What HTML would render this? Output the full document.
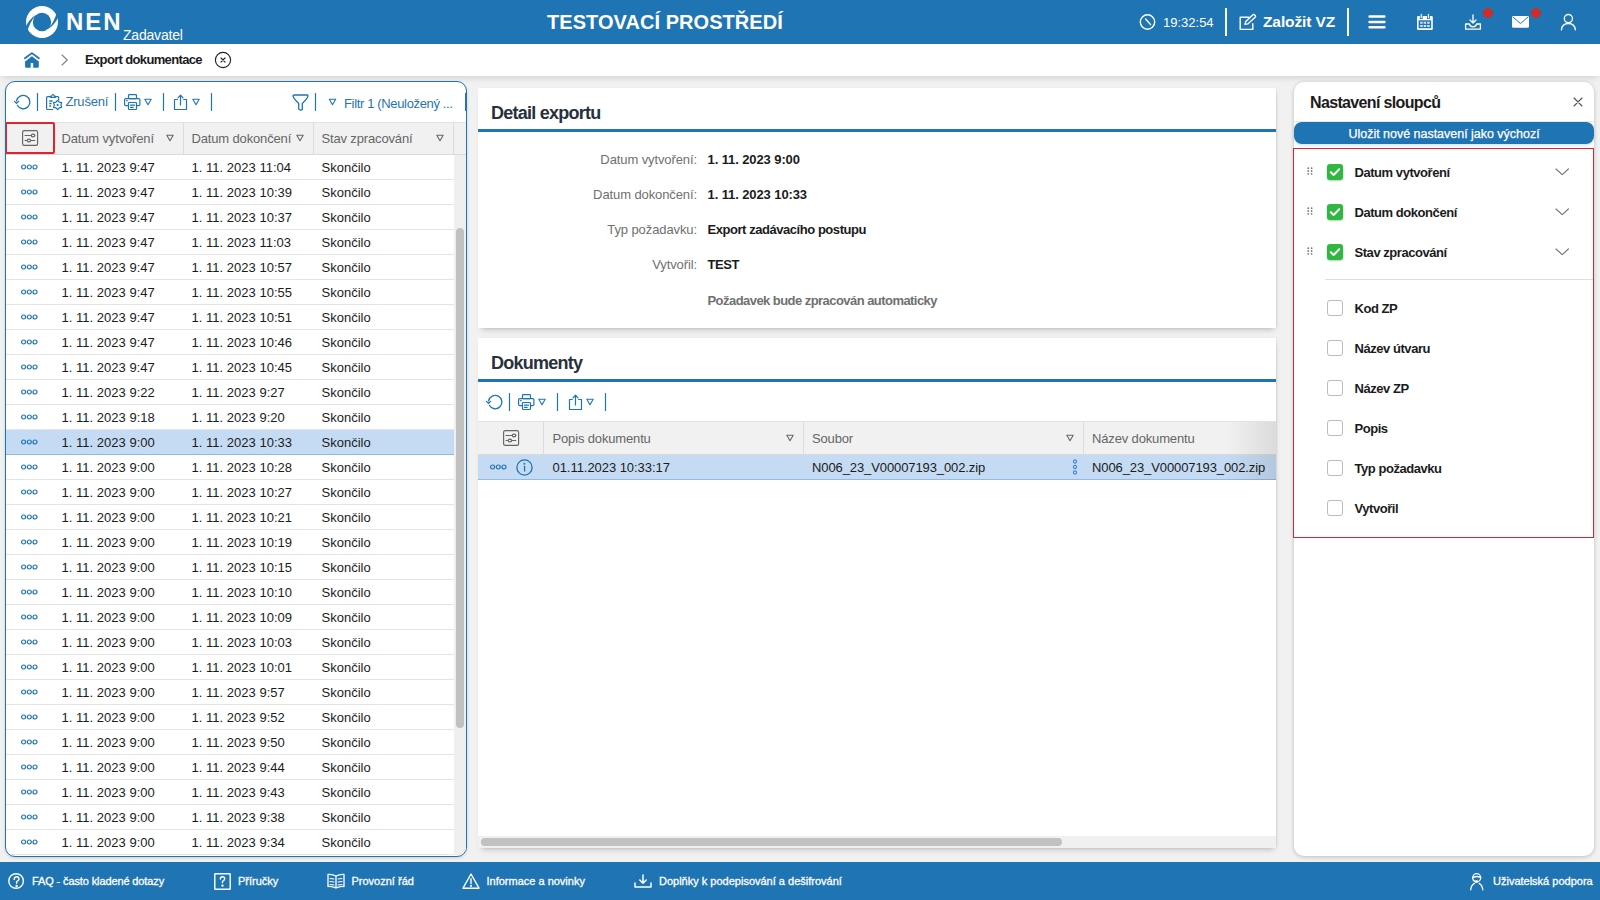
<!DOCTYPE html>
<html><head><meta charset="utf-8"><style>
*{box-sizing:border-box;margin:0;padding:0}
html,body{width:1600px;height:900px;overflow:hidden;background:#f1f1f1;font-family:"Liberation Sans",sans-serif;color:#1b1b1b}
.a{position:absolute}
.t{position:absolute;white-space:nowrap;line-height:1}
svg{position:absolute;overflow:visible}
#hdr{position:absolute;left:0;top:0;width:1600px;height:44px;background:#1f74b3;color:#fff}
#bc{position:absolute;left:0;top:44px;width:1600px;height:32px;background:#fff;box-shadow:0 3px 7px -2px rgba(0,0,0,.16)}
#ftr{position:absolute;left:0;top:862px;width:1600px;height:38px;background:#1f74b3;color:#fff;font-size:12px}
#ftr .t{-webkit-text-stroke:0.3px #fff}
#lp{position:absolute;left:5px;top:81px;width:462px;height:776px;border:1.5px solid #1f74b3;border-radius:10px;background:#fff;overflow:hidden;box-shadow:0 1px 3px rgba(0,0,0,.15)}
.row{position:absolute;left:0;width:448px;height:25px;border-bottom:1px solid #e4e4e4;font-size:13px}
.row .t{top:7px}
.panel{position:absolute;background:#fff;box-shadow:1px 4px 6px -3px rgba(0,0,0,.25),1px 0 2px -1px rgba(0,0,0,.18)}
.sep{position:absolute;width:2px;background:#1f74b3}
.hd{position:absolute;color:#6a6a6a;font-size:13px}
</style></head><body>
<div id="hdr">
<svg style="left:26px;top:6px" width="32" height="32" viewBox="0 0 32 32" fill="none" ><circle cx="16" cy="16" r="16" fill="#fff"/><circle cx="16" cy="16" r="9.2" fill="#1f74b3"/><path d="M10 9 C5.5 11.5 1.5 16 -0.5 22 L1 26 C3 19 6 13.5 10 9 Z" fill="#1f74b3"/><path d="M22 23 C26.5 20.5 30.5 16 32.5 10 L31 6 C29 13 26 18.5 22 23 Z" fill="#1f74b3"/></svg>
<div class="t" style="left:66px;top:10px;font-size:24px;font-weight:700;letter-spacing:1.9px">NEN</div>
<div class="t" style="left:123px;top:28px;font-size:14px;letter-spacing:-0.2px">Zadavatel</div>
<div class="t" style="left:547px;top:12px;font-size:20px;font-weight:700;letter-spacing:0.05px">TESTOVACÍ PROSTŘEDÍ</div>
<svg style="left:1139px;top:14px" width="17" height="17" viewBox="0 0 17 17" stroke="#fff" stroke-width="1.4" stroke-linecap="round" stroke-linejoin="round" fill="none" ><circle cx="8.5" cy="8" r="7.2"/><path d="M6.6 5 L11.6 10.6"/></svg>
<div class="t" style="left:1163px;top:16px;font-size:13px">19:32:54</div>
<div class="a" style="left:1225px;top:8px;width:2px;height:28px;background:#fff"></div>
<svg style="left:1239px;top:14px" width="18" height="17" viewBox="0 0 18 17" stroke="#fff" stroke-width="1.4" stroke-linecap="round" stroke-linejoin="round" fill="none" ><path d="M10 3.2 H1.2 V15.4 H13.8 V9.6"/><path d="M6 10.3 L6.8 7.6 L14.2 0.6 Q14.8 0.1 15.4 0.7 L16.4 1.7 Q16.9 2.3 16.4 2.9 L8.8 9.9 Z"/></svg>
<div class="t" style="left:1263px;top:14px;font-size:15.5px;font-weight:700;letter-spacing:-0.1px">Založit VZ</div>
<div class="a" style="left:1347px;top:8px;width:2px;height:28px;background:#fff"></div>
<svg style="left:1368px;top:14px" width="18" height="16" viewBox="0 0 18 16" stroke="#fff" stroke-width="2.5" stroke-linecap="round" stroke-linejoin="round" fill="none" ><path d="M1.6 2.5 H16.4 M1.6 8 H16.4 M1.6 13.3 H16.4"/></svg>
<svg style="left:1416px;top:13px" width="18" height="18" viewBox="0 0 18 18" fill="none" ><rect x="1" y="3" width="15.8" height="14" rx="1.3" fill="#fff"/><rect x="2.6" y="7.3" width="12.6" height="7.9" fill="#1f74b3"/><path d="M4.2 8.8 H6.7 V10.8 H4.2 Z M7.7 8.8 H10.2 V10.8 H7.7 Z M11.2 8.8 H13.7 V10.8 H11.2 Z M4.2 12 H6.7 V14 H4.2 Z M7.7 12 H10.2 V14 H7.7 Z M11.2 12 H13.7 V14 H11.2 Z" fill="#fff" fill-opacity="0.8"/><rect x="4.2" y="0.6" width="2" height="5" fill="#fff" stroke="#1f74b3" stroke-width="0.8"/><rect x="11.4" y="0.6" width="2" height="5" fill="#fff" stroke="#1f74b3" stroke-width="0.8"/></svg>
<svg style="left:1464px;top:14px" width="18" height="17" viewBox="0 0 18 17" stroke="#fff" stroke-width="1.3" stroke-linecap="round" stroke-linejoin="round" fill="none" ><path d="M9 0.8 V8.8 M6 6 L9 9 L12 6"/><path d="M1.6 10 V15.2 H16.4 V10 H12.6 C12.1 12 10.9 12.8 9 12.8 C7.1 12.8 5.9 12 5.4 10 Z"/></svg>
<div class="a" style="left:1483px;top:8px;width:10px;height:10px;border-radius:50%;background:#cf2b2b"></div>
<svg style="left:1512px;top:16px" width="17" height="12" viewBox="0 0 17 12" fill="none" ><rect x="0" y="0" width="17" height="11.8" rx="1.4" fill="#fff" stroke="none"/><path d="M0.9 0.9 L8.5 7.6 L16.1 0.9" stroke="#1f74b3" stroke-width="1" fill="none"/></svg>
<div class="a" style="left:1531px;top:8px;width:10px;height:10px;border-radius:50%;background:#cf2b2b"></div>
<svg style="left:1560px;top:13px" width="18" height="18" viewBox="0 0 18 18" stroke="#fff" stroke-width="1.3" stroke-linecap="round" stroke-linejoin="round" fill="none" ><circle cx="8.4" cy="5.6" r="4.1"/><path d="M1.4 16.9 C1.9 12.6 4.8 10.5 8.4 10.5 C12 10.5 14.9 12.6 15.4 16.9"/></svg>
</div>
<div id="bc">
<svg style="left:24px;top:8px" width="16" height="16" viewBox="0 0 16 16" fill="none" ><path d="M0.9 6.3 L7.9 1.1 L14.9 6.3" stroke="#1f74b3" stroke-width="1.8" fill="none" stroke-linecap="round" stroke-linejoin="round"/><path d="M1.1 9.6 L7.9 4.2 L14.8 9.6 V14.5 Q14.8 15.7 13.6 15.7 H9.2 V10.9 H6.7 V15.7 H2.3 Q1.1 15.7 1.1 14.5 Z" fill="#1f74b3"/></svg>
<svg style="left:60px;top:10px" width="10" height="12" viewBox="0 0 10 12" stroke="#808080" stroke-width="1.1" stroke-linecap="round" stroke-linejoin="round" fill="none" ><path d="M2 1 L7.3 6 L2 11"/></svg>
<div class="t" style="left:85px;top:9px;font-size:13px;font-weight:700;letter-spacing:-0.65px">Export dokumentace</div>
<svg style="left:214px;top:7px" width="18" height="18" viewBox="0 0 18 18" stroke="#222" stroke-width="1.15" stroke-linecap="round" stroke-linejoin="round" fill="none" ><circle cx="9" cy="9" r="7.6"/><path d="M7 7 L11 11 M11 7 L7 11"/></svg>
</div>
<div id="lp">
<div class="a" style="left:-6.5px;top:-82.5px;width:1600px;height:900px">
<svg style="left:14px;top:94px" width="17" height="16" viewBox="0 0 17 16" stroke="#1f74b3" stroke-width="1.3" stroke-linecap="round" stroke-linejoin="round" fill="none" ><path d="M2.6 6.9 A6.7 6.7 0 1 1 3.3 11.3"/><path d="M0.5 7.4 L2.5 9.4 L4.6 7.4" /></svg>
<svg style="left:35px;top:93.0px" width="4" height="18" viewBox="0 0 4 18" stroke="#1f74b3" stroke-width="1.2" stroke-linecap="round" stroke-linejoin="round" fill="none" ><path d="M2.50 0.6 V17.4"/></svg>
<svg style="left:46px;top:94px" width="17" height="17" viewBox="0 0 17 17" stroke="#1f74b3" stroke-width="1.2" stroke-linecap="round" stroke-linejoin="round" fill="none" ><path d="M4.8 2.6 H1.7 Q0.6 2.6 0.6 3.7 V14.4 Q0.6 15.5 1.7 15.5 H6.8"/><path d="M9.2 2.6 H11.6 Q12.7 2.6 12.7 3.7 V6"/><path d="M4.6 3.4 V2.7 Q4.6 2.1 5.2 2.1 H5.5 Q6 0.6 7 0.6 Q8 0.6 8.5 2.1 H8.8 Q9.4 2.1 9.4 2.7 V3.4 Z" stroke-width="1.1"/><path d="M3.3 7 H6.6 M3.3 9.5 H5.6 M3.3 11.9 H5" stroke-width="1.5" stroke-linecap="butt"/><path d="M11.60 6.30 L13.25 8.14 L15.67 8.65 L14.90 11.00 L15.67 13.35 L13.25 13.86 L11.60 15.70 L9.95 13.86 L7.53 13.35 L8.30 11.00 L7.53 8.65 L9.95 8.14 Z" fill="#fff" stroke-width="1.2"/><circle cx="11.6" cy="11" r="1.1" fill="#1f74b3" stroke="none"/></svg>
<div class="t" style="left:66px;top:95px;font-size:13px;color:#1f74b3;letter-spacing:-0.2px">Zrušení</div>
<svg style="left:113px;top:93.0px" width="4" height="18" viewBox="0 0 4 18" stroke="#1f74b3" stroke-width="1.2" stroke-linecap="round" stroke-linejoin="round" fill="none" ><path d="M2.50 0.6 V17.4"/></svg>
<svg style="left:124px;top:94px" width="17" height="17" viewBox="0 0 17 17" stroke="#1f74b3" stroke-width="1.2" stroke-linecap="round" stroke-linejoin="round" fill="none" ><rect x="4.5" y="0.6" width="8" height="4" rx="0.8"/><rect x="0.6" y="4.6" width="15.3" height="7" rx="1.2"/><rect x="4.5" y="8.5" width="8" height="7" rx="0.8" fill="#fff"/><path d="M6.5 11.2 H10.5 M6.5 13.3 H9.2 M2.6 6.7 H3.2"/></svg>
<svg style="left:144px;top:98px" width="9" height="8" viewBox="0 0 9 8" stroke="#1f74b3" stroke-width="1.1" stroke-linecap="round" stroke-linejoin="round" fill="none" ><path d="M0.80 1.30 H7.20 L4.00 6.70 Z"/></svg>
<svg style="left:161px;top:93.0px" width="4" height="18" viewBox="0 0 4 18" stroke="#1f74b3" stroke-width="1.2" stroke-linecap="round" stroke-linejoin="round" fill="none" ><path d="M2.50 0.6 V17.4"/></svg>
<svg style="left:173px;top:94px" width="15" height="17" viewBox="0 0 15 17" stroke="#1f74b3" stroke-width="1.2" stroke-linecap="round" stroke-linejoin="round" fill="none" ><path d="M4.3 5.5 H1.5 V15.5 H13.5 V5.5 H10.7"/><path d="M7.5 11 V1.3 M5 3.8 L7.5 1.2 L10 3.8"/></svg>
<svg style="left:192px;top:98px" width="9" height="8" viewBox="0 0 9 8" stroke="#1f74b3" stroke-width="1.1" stroke-linecap="round" stroke-linejoin="round" fill="none" ><path d="M0.80 1.30 H7.20 L4.00 6.70 Z"/></svg>
<svg style="left:209px;top:93.0px" width="4" height="18" viewBox="0 0 4 18" stroke="#1f74b3" stroke-width="1.2" stroke-linecap="round" stroke-linejoin="round" fill="none" ><path d="M2.50 0.6 V17.4"/></svg>
<svg style="left:292px;top:94px" width="17" height="17" viewBox="0 0 17 17" stroke="#1f74b3" stroke-width="1.3" stroke-linecap="round" stroke-linejoin="round" fill="none" ><path d="M1 1.8 Q1 1 2 1 H15 Q16 1 16 1.8 Q16 4.2 10.3 9.4 V15.6 L8.5 16.2 L6.7 15 V9.4 Q1 4.2 1 1.8 Z"/></svg>
<svg style="left:313px;top:93.0px" width="4" height="18" viewBox="0 0 4 18" stroke="#1f74b3" stroke-width="1.2" stroke-linecap="round" stroke-linejoin="round" fill="none" ><path d="M2.50 0.6 V17.4"/></svg>
<svg style="left:328px;top:98px" width="9" height="8" viewBox="0 0 9 8" stroke="#1f74b3" stroke-width="1.1" stroke-linecap="round" stroke-linejoin="round" fill="none" ><path d="M1.30 1.30 H7.70 L4.50 6.70 Z"/></svg>
<div class="t" style="left:344.5px;top:97px;font-size:13px;color:#1f74b3;letter-spacing:-0.35px">Filtr 1 (Neuložený ...</div>
<div class="a" style="left:465px;top:93px;width:2px;height:18px;background:#1f74b3"></div>
<div class="a" style="left:6px;top:122px;width:460px;height:33px;background:#f1f1f1;border-top:1px solid #e2e2e2;border-bottom:1px solid #dadada"></div>
<div class="a" style="left:183px;top:123px;width:1px;height:31px;background:#dcdcdc"></div>
<div class="a" style="left:313px;top:123px;width:1px;height:31px;background:#dcdcdc"></div>
<div class="a" style="left:453px;top:123px;width:1px;height:31px;background:#dcdcdc"></div>
<div class="a" style="left:5px;top:122px;width:50px;height:32px;border:2px solid #e0232d;border-radius:2px"></div>
<svg style="left:22px;top:130px" width="17" height="17" viewBox="0 0 17 17" stroke="#666" stroke-width="1.15" stroke-linecap="round" stroke-linejoin="round" fill="none" ><rect x="0.6" y="0.6" width="15" height="14.8" rx="1.6"/><path d="M3 5.5 H12.8 M3 10.5 H12.8"/><ellipse cx="11" cy="5.5" rx="1.8" ry="1.4" fill="#f1f1f1"/><ellipse cx="6.9" cy="10.5" rx="1.8" ry="1.4" fill="#f1f1f1"/></svg>
<div class="t" style="left:62px;top:132px;font-size:13px;color:#666;letter-spacing:-0.15px">Datum vytvoření</div>
<svg style="left:166px;top:134px" width="9" height="8" viewBox="0 0 9 8" stroke="#666" stroke-width="1.1" stroke-linecap="round" stroke-linejoin="round" fill="none" ><path d="M0.80 1.30 H7.20 L4.00 6.70 Z"/></svg>
<div class="t" style="left:192px;top:132px;font-size:13px;color:#666;letter-spacing:-0.15px">Datum dokončení</div>
<svg style="left:296px;top:134px" width="9" height="8" viewBox="0 0 9 8" stroke="#666" stroke-width="1.1" stroke-linecap="round" stroke-linejoin="round" fill="none" ><path d="M0.80 1.30 H7.20 L4.00 6.70 Z"/></svg>
<div class="t" style="left:322px;top:132px;font-size:13px;color:#666;letter-spacing:-0.15px">Stav zpracování</div>
<svg style="left:436px;top:134px" width="9" height="8" viewBox="0 0 9 8" stroke="#666" stroke-width="1.1" stroke-linecap="round" stroke-linejoin="round" fill="none" ><path d="M0.80 1.30 H7.20 L4.00 6.70 Z"/></svg>
<div class="row" style="left:6px;top:155px;"></div>
<svg style="left:21.5px;top:164.5px" width="17" height="6" viewBox="0 0 17 6" stroke="#1f74b3" stroke-width="1.2" stroke-linecap="round" stroke-linejoin="round" fill="none" ><circle cx="2.6" cy="3" r="2"/><circle cx="8.3" cy="3" r="2"/><circle cx="14" cy="3" r="2"/></svg>
<div class="t" style="left:62px;top:161px;font-size:13px;letter-spacing:0.02px">1. 11. 2023 9:47</div>
<div class="t" style="left:192px;top:161px;font-size:13px;letter-spacing:0.02px">1. 11. 2023 11:04</div>
<div class="t" style="left:322px;top:161px;font-size:13px">Skončilo</div>
<div class="row" style="left:6px;top:180px;"></div>
<svg style="left:21.5px;top:189.5px" width="17" height="6" viewBox="0 0 17 6" stroke="#1f74b3" stroke-width="1.2" stroke-linecap="round" stroke-linejoin="round" fill="none" ><circle cx="2.6" cy="3" r="2"/><circle cx="8.3" cy="3" r="2"/><circle cx="14" cy="3" r="2"/></svg>
<div class="t" style="left:62px;top:186px;font-size:13px;letter-spacing:0.02px">1. 11. 2023 9:47</div>
<div class="t" style="left:192px;top:186px;font-size:13px;letter-spacing:0.02px">1. 11. 2023 10:39</div>
<div class="t" style="left:322px;top:186px;font-size:13px">Skončilo</div>
<div class="row" style="left:6px;top:205px;"></div>
<svg style="left:21.5px;top:214.5px" width="17" height="6" viewBox="0 0 17 6" stroke="#1f74b3" stroke-width="1.2" stroke-linecap="round" stroke-linejoin="round" fill="none" ><circle cx="2.6" cy="3" r="2"/><circle cx="8.3" cy="3" r="2"/><circle cx="14" cy="3" r="2"/></svg>
<div class="t" style="left:62px;top:211px;font-size:13px;letter-spacing:0.02px">1. 11. 2023 9:47</div>
<div class="t" style="left:192px;top:211px;font-size:13px;letter-spacing:0.02px">1. 11. 2023 10:37</div>
<div class="t" style="left:322px;top:211px;font-size:13px">Skončilo</div>
<div class="row" style="left:6px;top:230px;"></div>
<svg style="left:21.5px;top:239.5px" width="17" height="6" viewBox="0 0 17 6" stroke="#1f74b3" stroke-width="1.2" stroke-linecap="round" stroke-linejoin="round" fill="none" ><circle cx="2.6" cy="3" r="2"/><circle cx="8.3" cy="3" r="2"/><circle cx="14" cy="3" r="2"/></svg>
<div class="t" style="left:62px;top:236px;font-size:13px;letter-spacing:0.02px">1. 11. 2023 9:47</div>
<div class="t" style="left:192px;top:236px;font-size:13px;letter-spacing:0.02px">1. 11. 2023 11:03</div>
<div class="t" style="left:322px;top:236px;font-size:13px">Skončilo</div>
<div class="row" style="left:6px;top:255px;"></div>
<svg style="left:21.5px;top:264.5px" width="17" height="6" viewBox="0 0 17 6" stroke="#1f74b3" stroke-width="1.2" stroke-linecap="round" stroke-linejoin="round" fill="none" ><circle cx="2.6" cy="3" r="2"/><circle cx="8.3" cy="3" r="2"/><circle cx="14" cy="3" r="2"/></svg>
<div class="t" style="left:62px;top:261px;font-size:13px;letter-spacing:0.02px">1. 11. 2023 9:47</div>
<div class="t" style="left:192px;top:261px;font-size:13px;letter-spacing:0.02px">1. 11. 2023 10:57</div>
<div class="t" style="left:322px;top:261px;font-size:13px">Skončilo</div>
<div class="row" style="left:6px;top:280px;"></div>
<svg style="left:21.5px;top:289.5px" width="17" height="6" viewBox="0 0 17 6" stroke="#1f74b3" stroke-width="1.2" stroke-linecap="round" stroke-linejoin="round" fill="none" ><circle cx="2.6" cy="3" r="2"/><circle cx="8.3" cy="3" r="2"/><circle cx="14" cy="3" r="2"/></svg>
<div class="t" style="left:62px;top:286px;font-size:13px;letter-spacing:0.02px">1. 11. 2023 9:47</div>
<div class="t" style="left:192px;top:286px;font-size:13px;letter-spacing:0.02px">1. 11. 2023 10:55</div>
<div class="t" style="left:322px;top:286px;font-size:13px">Skončilo</div>
<div class="row" style="left:6px;top:305px;"></div>
<svg style="left:21.5px;top:314.5px" width="17" height="6" viewBox="0 0 17 6" stroke="#1f74b3" stroke-width="1.2" stroke-linecap="round" stroke-linejoin="round" fill="none" ><circle cx="2.6" cy="3" r="2"/><circle cx="8.3" cy="3" r="2"/><circle cx="14" cy="3" r="2"/></svg>
<div class="t" style="left:62px;top:311px;font-size:13px;letter-spacing:0.02px">1. 11. 2023 9:47</div>
<div class="t" style="left:192px;top:311px;font-size:13px;letter-spacing:0.02px">1. 11. 2023 10:51</div>
<div class="t" style="left:322px;top:311px;font-size:13px">Skončilo</div>
<div class="row" style="left:6px;top:330px;"></div>
<svg style="left:21.5px;top:339.5px" width="17" height="6" viewBox="0 0 17 6" stroke="#1f74b3" stroke-width="1.2" stroke-linecap="round" stroke-linejoin="round" fill="none" ><circle cx="2.6" cy="3" r="2"/><circle cx="8.3" cy="3" r="2"/><circle cx="14" cy="3" r="2"/></svg>
<div class="t" style="left:62px;top:336px;font-size:13px;letter-spacing:0.02px">1. 11. 2023 9:47</div>
<div class="t" style="left:192px;top:336px;font-size:13px;letter-spacing:0.02px">1. 11. 2023 10:46</div>
<div class="t" style="left:322px;top:336px;font-size:13px">Skončilo</div>
<div class="row" style="left:6px;top:355px;"></div>
<svg style="left:21.5px;top:364.5px" width="17" height="6" viewBox="0 0 17 6" stroke="#1f74b3" stroke-width="1.2" stroke-linecap="round" stroke-linejoin="round" fill="none" ><circle cx="2.6" cy="3" r="2"/><circle cx="8.3" cy="3" r="2"/><circle cx="14" cy="3" r="2"/></svg>
<div class="t" style="left:62px;top:361px;font-size:13px;letter-spacing:0.02px">1. 11. 2023 9:47</div>
<div class="t" style="left:192px;top:361px;font-size:13px;letter-spacing:0.02px">1. 11. 2023 10:45</div>
<div class="t" style="left:322px;top:361px;font-size:13px">Skončilo</div>
<div class="row" style="left:6px;top:380px;"></div>
<svg style="left:21.5px;top:389.5px" width="17" height="6" viewBox="0 0 17 6" stroke="#1f74b3" stroke-width="1.2" stroke-linecap="round" stroke-linejoin="round" fill="none" ><circle cx="2.6" cy="3" r="2"/><circle cx="8.3" cy="3" r="2"/><circle cx="14" cy="3" r="2"/></svg>
<div class="t" style="left:62px;top:386px;font-size:13px;letter-spacing:0.02px">1. 11. 2023 9:22</div>
<div class="t" style="left:192px;top:386px;font-size:13px;letter-spacing:0.02px">1. 11. 2023 9:27</div>
<div class="t" style="left:322px;top:386px;font-size:13px">Skončilo</div>
<div class="row" style="left:6px;top:405px;"></div>
<svg style="left:21.5px;top:414.5px" width="17" height="6" viewBox="0 0 17 6" stroke="#1f74b3" stroke-width="1.2" stroke-linecap="round" stroke-linejoin="round" fill="none" ><circle cx="2.6" cy="3" r="2"/><circle cx="8.3" cy="3" r="2"/><circle cx="14" cy="3" r="2"/></svg>
<div class="t" style="left:62px;top:411px;font-size:13px;letter-spacing:0.02px">1. 11. 2023 9:18</div>
<div class="t" style="left:192px;top:411px;font-size:13px;letter-spacing:0.02px">1. 11. 2023 9:20</div>
<div class="t" style="left:322px;top:411px;font-size:13px">Skončilo</div>
<div class="row" style="left:6px;top:430px;background:#c5dbf3;border-bottom-color:#8fbbe6;"></div>
<svg style="left:21.5px;top:439.5px" width="17" height="6" viewBox="0 0 17 6" stroke="#1f74b3" stroke-width="1.2" stroke-linecap="round" stroke-linejoin="round" fill="none" ><circle cx="2.6" cy="3" r="2"/><circle cx="8.3" cy="3" r="2"/><circle cx="14" cy="3" r="2"/></svg>
<div class="t" style="left:62px;top:436px;font-size:13px;letter-spacing:0.02px">1. 11. 2023 9:00</div>
<div class="t" style="left:192px;top:436px;font-size:13px;letter-spacing:0.02px">1. 11. 2023 10:33</div>
<div class="t" style="left:322px;top:436px;font-size:13px">Skončilo</div>
<div class="row" style="left:6px;top:455px;"></div>
<svg style="left:21.5px;top:464.5px" width="17" height="6" viewBox="0 0 17 6" stroke="#1f74b3" stroke-width="1.2" stroke-linecap="round" stroke-linejoin="round" fill="none" ><circle cx="2.6" cy="3" r="2"/><circle cx="8.3" cy="3" r="2"/><circle cx="14" cy="3" r="2"/></svg>
<div class="t" style="left:62px;top:461px;font-size:13px;letter-spacing:0.02px">1. 11. 2023 9:00</div>
<div class="t" style="left:192px;top:461px;font-size:13px;letter-spacing:0.02px">1. 11. 2023 10:28</div>
<div class="t" style="left:322px;top:461px;font-size:13px">Skončilo</div>
<div class="row" style="left:6px;top:480px;"></div>
<svg style="left:21.5px;top:489.5px" width="17" height="6" viewBox="0 0 17 6" stroke="#1f74b3" stroke-width="1.2" stroke-linecap="round" stroke-linejoin="round" fill="none" ><circle cx="2.6" cy="3" r="2"/><circle cx="8.3" cy="3" r="2"/><circle cx="14" cy="3" r="2"/></svg>
<div class="t" style="left:62px;top:486px;font-size:13px;letter-spacing:0.02px">1. 11. 2023 9:00</div>
<div class="t" style="left:192px;top:486px;font-size:13px;letter-spacing:0.02px">1. 11. 2023 10:27</div>
<div class="t" style="left:322px;top:486px;font-size:13px">Skončilo</div>
<div class="row" style="left:6px;top:505px;"></div>
<svg style="left:21.5px;top:514.5px" width="17" height="6" viewBox="0 0 17 6" stroke="#1f74b3" stroke-width="1.2" stroke-linecap="round" stroke-linejoin="round" fill="none" ><circle cx="2.6" cy="3" r="2"/><circle cx="8.3" cy="3" r="2"/><circle cx="14" cy="3" r="2"/></svg>
<div class="t" style="left:62px;top:511px;font-size:13px;letter-spacing:0.02px">1. 11. 2023 9:00</div>
<div class="t" style="left:192px;top:511px;font-size:13px;letter-spacing:0.02px">1. 11. 2023 10:21</div>
<div class="t" style="left:322px;top:511px;font-size:13px">Skončilo</div>
<div class="row" style="left:6px;top:530px;"></div>
<svg style="left:21.5px;top:539.5px" width="17" height="6" viewBox="0 0 17 6" stroke="#1f74b3" stroke-width="1.2" stroke-linecap="round" stroke-linejoin="round" fill="none" ><circle cx="2.6" cy="3" r="2"/><circle cx="8.3" cy="3" r="2"/><circle cx="14" cy="3" r="2"/></svg>
<div class="t" style="left:62px;top:536px;font-size:13px;letter-spacing:0.02px">1. 11. 2023 9:00</div>
<div class="t" style="left:192px;top:536px;font-size:13px;letter-spacing:0.02px">1. 11. 2023 10:19</div>
<div class="t" style="left:322px;top:536px;font-size:13px">Skončilo</div>
<div class="row" style="left:6px;top:555px;"></div>
<svg style="left:21.5px;top:564.5px" width="17" height="6" viewBox="0 0 17 6" stroke="#1f74b3" stroke-width="1.2" stroke-linecap="round" stroke-linejoin="round" fill="none" ><circle cx="2.6" cy="3" r="2"/><circle cx="8.3" cy="3" r="2"/><circle cx="14" cy="3" r="2"/></svg>
<div class="t" style="left:62px;top:561px;font-size:13px;letter-spacing:0.02px">1. 11. 2023 9:00</div>
<div class="t" style="left:192px;top:561px;font-size:13px;letter-spacing:0.02px">1. 11. 2023 10:15</div>
<div class="t" style="left:322px;top:561px;font-size:13px">Skončilo</div>
<div class="row" style="left:6px;top:580px;"></div>
<svg style="left:21.5px;top:589.5px" width="17" height="6" viewBox="0 0 17 6" stroke="#1f74b3" stroke-width="1.2" stroke-linecap="round" stroke-linejoin="round" fill="none" ><circle cx="2.6" cy="3" r="2"/><circle cx="8.3" cy="3" r="2"/><circle cx="14" cy="3" r="2"/></svg>
<div class="t" style="left:62px;top:586px;font-size:13px;letter-spacing:0.02px">1. 11. 2023 9:00</div>
<div class="t" style="left:192px;top:586px;font-size:13px;letter-spacing:0.02px">1. 11. 2023 10:10</div>
<div class="t" style="left:322px;top:586px;font-size:13px">Skončilo</div>
<div class="row" style="left:6px;top:605px;"></div>
<svg style="left:21.5px;top:614.5px" width="17" height="6" viewBox="0 0 17 6" stroke="#1f74b3" stroke-width="1.2" stroke-linecap="round" stroke-linejoin="round" fill="none" ><circle cx="2.6" cy="3" r="2"/><circle cx="8.3" cy="3" r="2"/><circle cx="14" cy="3" r="2"/></svg>
<div class="t" style="left:62px;top:611px;font-size:13px;letter-spacing:0.02px">1. 11. 2023 9:00</div>
<div class="t" style="left:192px;top:611px;font-size:13px;letter-spacing:0.02px">1. 11. 2023 10:09</div>
<div class="t" style="left:322px;top:611px;font-size:13px">Skončilo</div>
<div class="row" style="left:6px;top:630px;"></div>
<svg style="left:21.5px;top:639.5px" width="17" height="6" viewBox="0 0 17 6" stroke="#1f74b3" stroke-width="1.2" stroke-linecap="round" stroke-linejoin="round" fill="none" ><circle cx="2.6" cy="3" r="2"/><circle cx="8.3" cy="3" r="2"/><circle cx="14" cy="3" r="2"/></svg>
<div class="t" style="left:62px;top:636px;font-size:13px;letter-spacing:0.02px">1. 11. 2023 9:00</div>
<div class="t" style="left:192px;top:636px;font-size:13px;letter-spacing:0.02px">1. 11. 2023 10:03</div>
<div class="t" style="left:322px;top:636px;font-size:13px">Skončilo</div>
<div class="row" style="left:6px;top:655px;"></div>
<svg style="left:21.5px;top:664.5px" width="17" height="6" viewBox="0 0 17 6" stroke="#1f74b3" stroke-width="1.2" stroke-linecap="round" stroke-linejoin="round" fill="none" ><circle cx="2.6" cy="3" r="2"/><circle cx="8.3" cy="3" r="2"/><circle cx="14" cy="3" r="2"/></svg>
<div class="t" style="left:62px;top:661px;font-size:13px;letter-spacing:0.02px">1. 11. 2023 9:00</div>
<div class="t" style="left:192px;top:661px;font-size:13px;letter-spacing:0.02px">1. 11. 2023 10:01</div>
<div class="t" style="left:322px;top:661px;font-size:13px">Skončilo</div>
<div class="row" style="left:6px;top:680px;"></div>
<svg style="left:21.5px;top:689.5px" width="17" height="6" viewBox="0 0 17 6" stroke="#1f74b3" stroke-width="1.2" stroke-linecap="round" stroke-linejoin="round" fill="none" ><circle cx="2.6" cy="3" r="2"/><circle cx="8.3" cy="3" r="2"/><circle cx="14" cy="3" r="2"/></svg>
<div class="t" style="left:62px;top:686px;font-size:13px;letter-spacing:0.02px">1. 11. 2023 9:00</div>
<div class="t" style="left:192px;top:686px;font-size:13px;letter-spacing:0.02px">1. 11. 2023 9:57</div>
<div class="t" style="left:322px;top:686px;font-size:13px">Skončilo</div>
<div class="row" style="left:6px;top:705px;"></div>
<svg style="left:21.5px;top:714.5px" width="17" height="6" viewBox="0 0 17 6" stroke="#1f74b3" stroke-width="1.2" stroke-linecap="round" stroke-linejoin="round" fill="none" ><circle cx="2.6" cy="3" r="2"/><circle cx="8.3" cy="3" r="2"/><circle cx="14" cy="3" r="2"/></svg>
<div class="t" style="left:62px;top:711px;font-size:13px;letter-spacing:0.02px">1. 11. 2023 9:00</div>
<div class="t" style="left:192px;top:711px;font-size:13px;letter-spacing:0.02px">1. 11. 2023 9:52</div>
<div class="t" style="left:322px;top:711px;font-size:13px">Skončilo</div>
<div class="row" style="left:6px;top:730px;"></div>
<svg style="left:21.5px;top:739.5px" width="17" height="6" viewBox="0 0 17 6" stroke="#1f74b3" stroke-width="1.2" stroke-linecap="round" stroke-linejoin="round" fill="none" ><circle cx="2.6" cy="3" r="2"/><circle cx="8.3" cy="3" r="2"/><circle cx="14" cy="3" r="2"/></svg>
<div class="t" style="left:62px;top:736px;font-size:13px;letter-spacing:0.02px">1. 11. 2023 9:00</div>
<div class="t" style="left:192px;top:736px;font-size:13px;letter-spacing:0.02px">1. 11. 2023 9:50</div>
<div class="t" style="left:322px;top:736px;font-size:13px">Skončilo</div>
<div class="row" style="left:6px;top:755px;"></div>
<svg style="left:21.5px;top:764.5px" width="17" height="6" viewBox="0 0 17 6" stroke="#1f74b3" stroke-width="1.2" stroke-linecap="round" stroke-linejoin="round" fill="none" ><circle cx="2.6" cy="3" r="2"/><circle cx="8.3" cy="3" r="2"/><circle cx="14" cy="3" r="2"/></svg>
<div class="t" style="left:62px;top:761px;font-size:13px;letter-spacing:0.02px">1. 11. 2023 9:00</div>
<div class="t" style="left:192px;top:761px;font-size:13px;letter-spacing:0.02px">1. 11. 2023 9:44</div>
<div class="t" style="left:322px;top:761px;font-size:13px">Skončilo</div>
<div class="row" style="left:6px;top:780px;"></div>
<svg style="left:21.5px;top:789.5px" width="17" height="6" viewBox="0 0 17 6" stroke="#1f74b3" stroke-width="1.2" stroke-linecap="round" stroke-linejoin="round" fill="none" ><circle cx="2.6" cy="3" r="2"/><circle cx="8.3" cy="3" r="2"/><circle cx="14" cy="3" r="2"/></svg>
<div class="t" style="left:62px;top:786px;font-size:13px;letter-spacing:0.02px">1. 11. 2023 9:00</div>
<div class="t" style="left:192px;top:786px;font-size:13px;letter-spacing:0.02px">1. 11. 2023 9:43</div>
<div class="t" style="left:322px;top:786px;font-size:13px">Skončilo</div>
<div class="row" style="left:6px;top:805px;"></div>
<svg style="left:21.5px;top:814.5px" width="17" height="6" viewBox="0 0 17 6" stroke="#1f74b3" stroke-width="1.2" stroke-linecap="round" stroke-linejoin="round" fill="none" ><circle cx="2.6" cy="3" r="2"/><circle cx="8.3" cy="3" r="2"/><circle cx="14" cy="3" r="2"/></svg>
<div class="t" style="left:62px;top:811px;font-size:13px;letter-spacing:0.02px">1. 11. 2023 9:00</div>
<div class="t" style="left:192px;top:811px;font-size:13px;letter-spacing:0.02px">1. 11. 2023 9:38</div>
<div class="t" style="left:322px;top:811px;font-size:13px">Skončilo</div>
<div class="row" style="left:6px;top:830px;"></div>
<svg style="left:21.5px;top:839.5px" width="17" height="6" viewBox="0 0 17 6" stroke="#1f74b3" stroke-width="1.2" stroke-linecap="round" stroke-linejoin="round" fill="none" ><circle cx="2.6" cy="3" r="2"/><circle cx="8.3" cy="3" r="2"/><circle cx="14" cy="3" r="2"/></svg>
<div class="t" style="left:62px;top:836px;font-size:13px;letter-spacing:0.02px">1. 11. 2023 9:00</div>
<div class="t" style="left:192px;top:836px;font-size:13px;letter-spacing:0.02px">1. 11. 2023 9:34</div>
<div class="t" style="left:322px;top:836px;font-size:13px">Skončilo</div>
<div class="a" style="left:454px;top:155px;width:12px;height:700px;background:#efefef"></div>
<div class="a" style="left:456px;top:228px;width:8px;height:500px;background:#c1c1c1;border-radius:4px"></div>
</div>
</div>
<div class="panel" style="left:478px;top:88px;width:798px;height:240px"></div>
<div class="t" style="left:491px;top:104px;font-size:18px;font-weight:700;color:#27313c;letter-spacing:-0.75px">Detail exportu</div>
<div class="a" style="left:478px;top:129px;width:798px;height:3px;background:#1f74b3"></div>
<div class="t" style="right:903px;top:153px;font-size:13px;color:#6f6f6f;letter-spacing:-0.1px">Datum vytvoření:</div>
<div class="t" style="left:707.5px;top:153px;font-size:13px;font-weight:700;letter-spacing:-0.1px">1. 11. 2023 9:00</div>
<div class="t" style="right:903px;top:188px;font-size:13px;color:#6f6f6f;letter-spacing:-0.1px">Datum dokončení:</div>
<div class="t" style="left:707.5px;top:188px;font-size:13px;font-weight:700;letter-spacing:-0.1px">1. 11. 2023 10:33</div>
<div class="t" style="right:903px;top:223px;font-size:13px;color:#6f6f6f;letter-spacing:-0.1px">Typ požadavku:</div>
<div class="t" style="left:707.5px;top:223px;font-size:13px;font-weight:700;letter-spacing:-0.45px">Export zadávacího postupu</div>
<div class="t" style="right:903px;top:258px;font-size:13px;color:#6f6f6f;letter-spacing:-0.1px">Vytvořil:</div>
<div class="t" style="left:707.5px;top:258px;font-size:13px;font-weight:700;letter-spacing:-0.45px">TEST</div>
<div class="t" style="left:707.5px;top:294px;font-size:13px;font-weight:700;color:#707070;letter-spacing:-0.55px">Požadavek bude zpracován automaticky</div>
<div class="panel" style="left:478px;top:338px;width:798px;height:510px"></div>
<div class="t" style="left:491px;top:354px;font-size:18px;font-weight:700;color:#27313c;letter-spacing:-0.75px">Dokumenty</div>
<div class="a" style="left:478px;top:379px;width:798px;height:3px;background:#1f74b3"></div>
<svg style="left:486px;top:394px" width="17" height="16" viewBox="0 0 17 16" stroke="#1f74b3" stroke-width="1.3" stroke-linecap="round" stroke-linejoin="round" fill="none" ><path d="M2.6 6.9 A6.7 6.7 0 1 1 3.3 11.3"/><path d="M0.5 7.4 L2.5 9.4 L4.6 7.4" /></svg>
<svg style="left:507px;top:393.0px" width="4" height="18" viewBox="0 0 4 18" stroke="#1f74b3" stroke-width="1.2" stroke-linecap="round" stroke-linejoin="round" fill="none" ><path d="M2.50 0.6 V17.4"/></svg>
<svg style="left:518px;top:394px" width="17" height="17" viewBox="0 0 17 17" stroke="#1f74b3" stroke-width="1.2" stroke-linecap="round" stroke-linejoin="round" fill="none" ><rect x="4.5" y="0.6" width="8" height="4" rx="0.8"/><rect x="0.6" y="4.6" width="15.3" height="7" rx="1.2"/><rect x="4.5" y="8.5" width="8" height="7" rx="0.8" fill="#fff"/><path d="M6.5 11.2 H10.5 M6.5 13.3 H9.2 M2.6 6.7 H3.2"/></svg>
<svg style="left:538px;top:398px" width="9" height="8" viewBox="0 0 9 8" stroke="#1f74b3" stroke-width="1.1" stroke-linecap="round" stroke-linejoin="round" fill="none" ><path d="M0.80 1.30 H7.20 L4.00 6.70 Z"/></svg>
<svg style="left:555px;top:393.0px" width="4" height="18" viewBox="0 0 4 18" stroke="#1f74b3" stroke-width="1.2" stroke-linecap="round" stroke-linejoin="round" fill="none" ><path d="M2.50 0.6 V17.4"/></svg>
<svg style="left:568px;top:394px" width="15" height="17" viewBox="0 0 15 17" stroke="#1f74b3" stroke-width="1.2" stroke-linecap="round" stroke-linejoin="round" fill="none" ><path d="M4.3 5.5 H1.5 V15.5 H13.5 V5.5 H10.7"/><path d="M7.5 11 V1.3 M5 3.8 L7.5 1.2 L10 3.8"/></svg>
<svg style="left:586px;top:398px" width="9" height="8" viewBox="0 0 9 8" stroke="#1f74b3" stroke-width="1.1" stroke-linecap="round" stroke-linejoin="round" fill="none" ><path d="M0.80 1.30 H7.20 L4.00 6.70 Z"/></svg>
<svg style="left:603px;top:393.0px" width="4" height="18" viewBox="0 0 4 18" stroke="#1f74b3" stroke-width="1.2" stroke-linecap="round" stroke-linejoin="round" fill="none" ><path d="M2.50 0.6 V17.4"/></svg>
<div class="a" style="left:478px;top:421px;width:798px;height:34px;background:#f1f1f1;border-top:1px solid #e2e2e2;border-bottom:1px solid #dadada"></div>
<div class="a" style="left:543px;top:422px;width:1px;height:32px;background:#dcdcdc"></div>
<div class="a" style="left:803px;top:422px;width:1px;height:32px;background:#dcdcdc"></div>
<div class="a" style="left:1083px;top:422px;width:1px;height:32px;background:#dcdcdc"></div>
<svg style="left:503px;top:430px" width="17" height="17" viewBox="0 0 17 17" stroke="#666" stroke-width="1.15" stroke-linecap="round" stroke-linejoin="round" fill="none" ><rect x="0.6" y="0.6" width="15" height="14.8" rx="1.6"/><path d="M3 5.5 H12.8 M3 10.5 H12.8"/><ellipse cx="11" cy="5.5" rx="1.8" ry="1.4" fill="#f1f1f1"/><ellipse cx="6.9" cy="10.5" rx="1.8" ry="1.4" fill="#f1f1f1"/></svg>
<div class="t" style="left:552.5px;top:432px;font-size:13px;color:#666;letter-spacing:-0.15px">Popis dokumentu</div>
<svg style="left:786px;top:434px" width="9" height="8" viewBox="0 0 9 8" stroke="#666" stroke-width="1.1" stroke-linecap="round" stroke-linejoin="round" fill="none" ><path d="M0.80 1.30 H7.20 L4.00 6.70 Z"/></svg>
<div class="t" style="left:812px;top:432px;font-size:13px;color:#666;letter-spacing:-0.15px">Soubor</div>
<svg style="left:1066px;top:434px" width="9" height="8" viewBox="0 0 9 8" stroke="#666" stroke-width="1.1" stroke-linecap="round" stroke-linejoin="round" fill="none" ><path d="M0.80 1.30 H7.20 L4.00 6.70 Z"/></svg>
<div class="t" style="left:1092px;top:432px;font-size:13px;color:#666;letter-spacing:-0.15px">Název dokumentu</div>
<div class="a" style="left:478px;top:455px;width:798px;height:25px;background:#c5dbf3;border-bottom:1px solid #8fbbe6"></div>
<svg style="left:489.5px;top:464px" width="17" height="6" viewBox="0 0 17 6" stroke="#1f74b3" stroke-width="1.2" stroke-linecap="round" stroke-linejoin="round" fill="none" ><circle cx="2.6" cy="3" r="2"/><circle cx="8.3" cy="3" r="2"/><circle cx="14" cy="3" r="2"/></svg>
<svg style="left:515.5px;top:458.5px" width="17" height="17" viewBox="0 0 17 17" stroke="#1f74b3" stroke-width="1.3" stroke-linecap="round" stroke-linejoin="round" fill="none" ><circle cx="8.5" cy="8.5" r="7.6"/><path d="M8.6 7.3 V12"/><circle cx="8.4" cy="4.8" r="0.4" fill="#1f74b3"/></svg>
<div class="t" style="left:552.5px;top:461px;font-size:13px;letter-spacing:-0.05px">01.11.2023 10:33:17</div>
<div class="t" style="left:812px;top:461px;font-size:13px;letter-spacing:-0.1px">N006_23_V00007193_002.zip</div>
<svg style="left:1072px;top:459px" width="6" height="16" viewBox="0 0 6 16" stroke="#3a86d4" stroke-width="1.1" stroke-linecap="round" stroke-linejoin="round" fill="none" ><circle cx="3" cy="2.5" r="1.6"/><circle cx="3" cy="8" r="1.6"/><circle cx="3" cy="13.5" r="1.6"/></svg>
<div class="t" style="left:1092px;top:461px;font-size:13px;letter-spacing:-0.1px">N006_23_V00007193_002.zip</div>
<div class="a" style="left:1226px;top:422px;width:50px;height:58px;background:linear-gradient(to right,rgba(0,0,0,0),rgba(0,0,0,.09))"></div>
<div class="a" style="left:478px;top:836px;width:798px;height:12px;background:#f0f0f0"></div>
<div class="a" style="left:480.5px;top:838px;width:581px;height:8px;background:#c1c1c1;border-radius:4px"></div>
<div class="panel" style="left:1294px;top:82px;width:300px;height:774px;border-radius:10px;box-shadow:0 1px 4px rgba(0,0,0,.22)"></div>
<div class="t" style="left:1310px;top:95px;font-size:16px;font-weight:700;letter-spacing:-0.65px">Nastavení sloupců</div>
<svg style="left:1573px;top:97px" width="10" height="10" viewBox="0 0 10 10" stroke="#555" stroke-width="1.1" stroke-linecap="round" stroke-linejoin="round" fill="none" ><path d="M1 1 L9 9 M9 1 L1 9"/></svg>
<div class="a" style="left:1294px;top:121px;width:300px;height:1px;background:#e8e8e8"></div>
<div class="a" style="left:1294px;top:122px;width:300px;height:22px;background:#1f74b3;border-radius:8px;box-shadow:0 2px 3px rgba(0,60,130,.13)"></div>
<div class="t" style="left:1348.5px;top:128px;font-size:12.5px;color:#fff;letter-spacing:-0.02px;-webkit-text-stroke:0.25px #fff">Uložit nové nastavení jako výchozí</div>
<div class="a" style="left:1293px;top:148px;width:301px;height:390px;border:1px solid #e0232d"></div>
<svg style="left:1307px;top:167px" width="6" height="8" viewBox="0 0 6 8" fill="#777" ><circle cx="1.2" cy="1.2" r="0.9"/><circle cx="4.6" cy="1.2" r="0.9"/><circle cx="1.2" cy="4" r="0.9"/><circle cx="4.6" cy="4" r="0.9"/><circle cx="1.2" cy="6.8" r="0.9"/><circle cx="4.6" cy="6.8" r="0.9"/></svg>
<div class="a" style="left:1327px;top:164px;width:16px;height:16px;background:#2fb83f;border-radius:3px;box-shadow:0 1px 2px rgba(0,100,0,.3)"></div>
<svg style="left:1327px;top:164px" width="16" height="16" viewBox="0 0 16 16" stroke="#fff" stroke-width="2" stroke-linecap="round" stroke-linejoin="round" fill="none" ><path d="M3.8 8.3 L6.6 11 L12.2 5.2"/></svg>
<div class="t" style="left:1354.5px;top:166px;font-size:13px;font-weight:700;letter-spacing:-0.45px">Datum vytvoření</div>
<svg style="left:1555px;top:168px" width="15" height="8" viewBox="0 0 15 8" stroke="#777" stroke-width="1.2" stroke-linecap="round" stroke-linejoin="round" fill="none" ><path d="M1 1 L7.2 6.6 L13.4 1"/></svg>
<svg style="left:1307px;top:207px" width="6" height="8" viewBox="0 0 6 8" fill="#777" ><circle cx="1.2" cy="1.2" r="0.9"/><circle cx="4.6" cy="1.2" r="0.9"/><circle cx="1.2" cy="4" r="0.9"/><circle cx="4.6" cy="4" r="0.9"/><circle cx="1.2" cy="6.8" r="0.9"/><circle cx="4.6" cy="6.8" r="0.9"/></svg>
<div class="a" style="left:1327px;top:204px;width:16px;height:16px;background:#2fb83f;border-radius:3px;box-shadow:0 1px 2px rgba(0,100,0,.3)"></div>
<svg style="left:1327px;top:204px" width="16" height="16" viewBox="0 0 16 16" stroke="#fff" stroke-width="2" stroke-linecap="round" stroke-linejoin="round" fill="none" ><path d="M3.8 8.3 L6.6 11 L12.2 5.2"/></svg>
<div class="t" style="left:1354.5px;top:206px;font-size:13px;font-weight:700;letter-spacing:-0.45px">Datum dokončení</div>
<svg style="left:1555px;top:208px" width="15" height="8" viewBox="0 0 15 8" stroke="#777" stroke-width="1.2" stroke-linecap="round" stroke-linejoin="round" fill="none" ><path d="M1 1 L7.2 6.6 L13.4 1"/></svg>
<svg style="left:1307px;top:247px" width="6" height="8" viewBox="0 0 6 8" fill="#777" ><circle cx="1.2" cy="1.2" r="0.9"/><circle cx="4.6" cy="1.2" r="0.9"/><circle cx="1.2" cy="4" r="0.9"/><circle cx="4.6" cy="4" r="0.9"/><circle cx="1.2" cy="6.8" r="0.9"/><circle cx="4.6" cy="6.8" r="0.9"/></svg>
<div class="a" style="left:1327px;top:244px;width:16px;height:16px;background:#2fb83f;border-radius:3px;box-shadow:0 1px 2px rgba(0,100,0,.3)"></div>
<svg style="left:1327px;top:244px" width="16" height="16" viewBox="0 0 16 16" stroke="#fff" stroke-width="2" stroke-linecap="round" stroke-linejoin="round" fill="none" ><path d="M3.8 8.3 L6.6 11 L12.2 5.2"/></svg>
<div class="t" style="left:1354.5px;top:246px;font-size:13px;font-weight:700;letter-spacing:-0.45px">Stav zpracování</div>
<svg style="left:1555px;top:248px" width="15" height="8" viewBox="0 0 15 8" stroke="#777" stroke-width="1.2" stroke-linecap="round" stroke-linejoin="round" fill="none" ><path d="M1 1 L7.2 6.6 L13.4 1"/></svg>
<div class="a" style="left:1325px;top:279px;width:268px;height:1px;background:#dedede"></div>
<div class="a" style="left:1327px;top:300px;width:16px;height:16px;background:#fff;border:1px solid #bdbdbd;border-radius:3px"></div>
<div class="t" style="left:1354.5px;top:302px;font-size:13px;font-weight:700;letter-spacing:-0.45px">Kod ZP</div>
<div class="a" style="left:1327px;top:340px;width:16px;height:16px;background:#fff;border:1px solid #bdbdbd;border-radius:3px"></div>
<div class="t" style="left:1354.5px;top:342px;font-size:13px;font-weight:700;letter-spacing:-0.45px">Název útvaru</div>
<div class="a" style="left:1327px;top:380px;width:16px;height:16px;background:#fff;border:1px solid #bdbdbd;border-radius:3px"></div>
<div class="t" style="left:1354.5px;top:382px;font-size:13px;font-weight:700;letter-spacing:-0.45px">Název ZP</div>
<div class="a" style="left:1327px;top:420px;width:16px;height:16px;background:#fff;border:1px solid #bdbdbd;border-radius:3px"></div>
<div class="t" style="left:1354.5px;top:422px;font-size:13px;font-weight:700;letter-spacing:-0.45px">Popis</div>
<div class="a" style="left:1327px;top:460px;width:16px;height:16px;background:#fff;border:1px solid #bdbdbd;border-radius:3px"></div>
<div class="t" style="left:1354.5px;top:462px;font-size:13px;font-weight:700;letter-spacing:-0.45px">Typ požadavku</div>
<div class="a" style="left:1327px;top:500px;width:16px;height:16px;background:#fff;border:1px solid #bdbdbd;border-radius:3px"></div>
<div class="t" style="left:1354.5px;top:502px;font-size:13px;font-weight:700;letter-spacing:-0.45px">Vytvořil</div>
<div id="ftr">
<svg style="left:8px;top:11px" width="17" height="17" viewBox="0 0 17 17" stroke="#fff" stroke-width="1.4" stroke-linecap="round" stroke-linejoin="round" fill="none" ><circle cx="8.1" cy="8" r="7.3"/><path d="M6.2 6.4 Q6.2 3.8 8.6 3.8 Q11 3.8 11 6 Q11 7.6 8.6 8.6 V10.3"/><circle cx="8.6" cy="13" r="0.5" fill="#fff"/></svg>
<div class="t" style="left:32px;top:14px;font-size:11px;letter-spacing:-0.12px">FAQ - často kladené dotazy</div>
<svg style="left:214px;top:11px" width="17" height="17" viewBox="0 0 17 17" stroke="#fff" stroke-width="1.4" stroke-linecap="round" stroke-linejoin="round" fill="none" ><rect x="0.8" y="0.8" width="15.4" height="15.4" rx="0.5"/><path d="M6.3 6 Q6.3 3.8 8.5 3.8 Q10.7 3.8 10.7 5.8 Q10.7 7.4 8.5 8.3 V9.8"/><circle cx="8.5" cy="12.6" r="0.5" fill="#fff"/></svg>
<div class="t" style="left:238px;top:14px;font-size:11px;letter-spacing:0px">Příručky</div>
<svg style="left:327px;top:11px" width="18" height="16" viewBox="0 0 18 16" stroke="#fff" stroke-width="1.3" stroke-linecap="round" stroke-linejoin="round" fill="none" ><path d="M9 3 Q5 1 1 1.5 V13.5 Q5 13 9 15 Q13 13 17 13.5 V1.5 Q13 1 9 3 Z M9 3 V15"/><path d="M3 5.5 L7 6 M3 8.5 L7 9 M3 11.5 L7 12 M11 6 L15 5.5 M11 9 L15 8.5 M11 12 L15 11.5" stroke-width="1.1"/></svg>
<div class="t" style="left:351.5px;top:14px;font-size:11px;letter-spacing:0px">Provozní řád</div>
<svg style="left:462px;top:11px" width="18" height="16" viewBox="0 0 18 16" stroke="#fff" stroke-width="1.4" stroke-linecap="round" stroke-linejoin="round" fill="none" ><path d="M9 1 L17 15.2 H1 Z"/><path d="M9 5.8 V10.6"/><circle cx="9" cy="12.9" r="0.4" fill="#fff"/></svg>
<div class="t" style="left:486.5px;top:14px;font-size:11px;letter-spacing:0px">Informace a novinky</div>
<svg style="left:634px;top:12px" width="18" height="14" viewBox="0 0 18 14" stroke="#fff" stroke-width="1.5" stroke-linecap="round" stroke-linejoin="round" fill="none" ><path d="M9 1 V9 M5.8 6 L9 9.2 L12.2 6"/><path d="M1 9 V13 H17 V9"/></svg>
<div class="t" style="left:659px;top:14px;font-size:11px;letter-spacing:0px">Doplňky k podepisování a dešifrování</div>
<svg style="left:1469px;top:11px" width="17" height="18" viewBox="0 0 17 18" stroke="#fff" stroke-width="1.3" stroke-linecap="round" stroke-linejoin="round" fill="none" ><circle cx="7.7" cy="4.7" r="4"/><path d="M3.9 4.6 Q7.7 2.6 11.5 4.3" stroke-width="1.5"/><path d="M4.3 7.3 Q5.4 8.6 7.2 8.5"/><circle cx="7.5" cy="8.5" r="0.9"/><path d="M5.4 10.3 Q2.1 12 1.7 16.8 M10.1 10.3 Q13.4 12 13.8 16.8"/></svg>
<div class="t" style="left:1493px;top:14px;font-size:11px;letter-spacing:0px">Uživatelská podpora</div>
</div>
</body></html>
